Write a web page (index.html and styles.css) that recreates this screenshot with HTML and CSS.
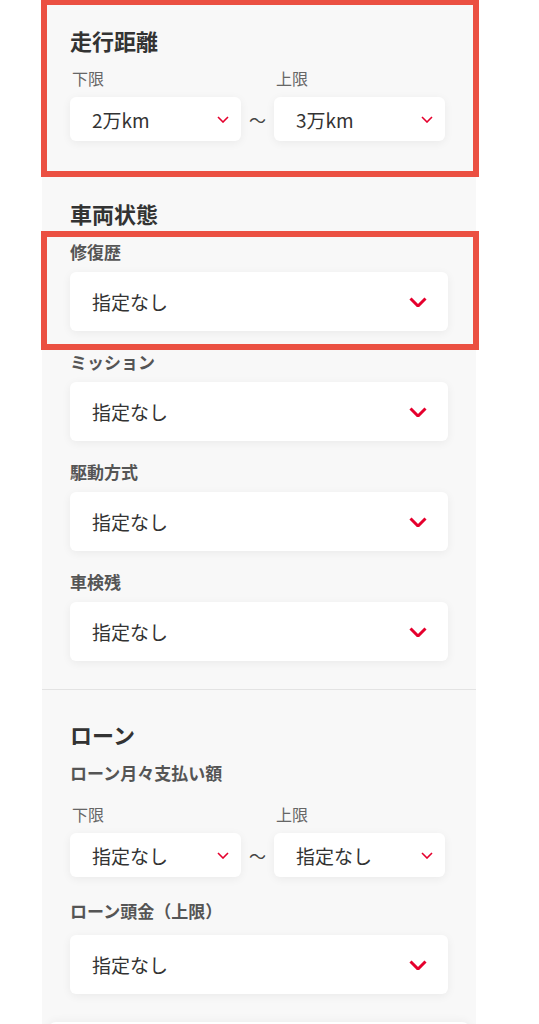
FILE: index.html
```html
<!DOCTYPE html>
<html lang="ja">
<head>
    <meta charset="UTF-8">
    <meta name="viewport" content="width=device-width, initial-scale=1.0">
    <title>絞り込み条件</title>
    <link rel="stylesheet" href="styles.css">
</head>
<body>
    <div class="panel">
        <section class="group">
            <h2 class="group-title">走行距離</h2>
            <div class="range">
                <div class="range-label">下限</div>
                <div></div>
                <div class="range-label">上限</div>
                <div class="select select-sm">
                    <span>2万km</span>
                    <svg width="12" height="7" viewBox="0 0 12 7"><path d="M1 1l5 5 5-5" fill="none" stroke="#e5002d" stroke-width="1.6"/></svg>
                </div>
                <div class="range-sep">〜</div>
                <div class="select select-sm">
                    <span>3万km</span>
                    <svg width="12" height="7" viewBox="0 0 12 7"><path d="M1 1l5 5 5-5" fill="none" stroke="#e5002d" stroke-width="1.6"/></svg>
                </div>
            </div>
        </section>

        <section class="group">
            <h2 class="group-title">車両状態</h2>
            <div class="field">
                <div class="field-label">修復歴</div>
                <div class="select">
                    <span>指定なし</span>
                    <svg width="18" height="10" viewBox="0 0 18 10"><path d="M1.5 1.5l7.5 7.5 7.5-7.5" fill="none" stroke="#e5002d" stroke-width="3"/></svg>
                </div>
            </div>
            <div class="field">
                <div class="field-label">ミッション</div>
                <div class="select">
                    <span>指定なし</span>
                    <svg width="18" height="10" viewBox="0 0 18 10"><path d="M1.5 1.5l7.5 7.5 7.5-7.5" fill="none" stroke="#e5002d" stroke-width="3"/></svg>
                </div>
            </div>
            <div class="field">
                <div class="field-label">駆動方式</div>
                <div class="select">
                    <span>指定なし</span>
                    <svg width="18" height="10" viewBox="0 0 18 10"><path d="M1.5 1.5l7.5 7.5 7.5-7.5" fill="none" stroke="#e5002d" stroke-width="3"/></svg>
                </div>
            </div>
            <div class="field">
                <div class="field-label">車検残</div>
                <div class="select">
                    <span>指定なし</span>
                    <svg width="18" height="10" viewBox="0 0 18 10"><path d="M1.5 1.5l7.5 7.5 7.5-7.5" fill="none" stroke="#e5002d" stroke-width="3"/></svg>
                </div>
            </div>
        </section>

        <section class="group group-divided">
            <h2 class="group-title">ローン</h2>
            <div class="field field-range">
                <div class="field-label">ローン月々支払い額</div>
                <div class="range">
                    <div class="range-label">下限</div>
                    <div></div>
                    <div class="range-label">上限</div>
                    <div class="select select-sm">
                        <span>指定なし</span>
                        <svg width="12" height="7" viewBox="0 0 12 7"><path d="M1 1l5 5 5-5" fill="none" stroke="#e5002d" stroke-width="1.6"/></svg>
                    </div>
                    <div class="range-sep">〜</div>
                    <div class="select select-sm">
                        <span>指定なし</span>
                        <svg width="12" height="7" viewBox="0 0 12 7"><path d="M1 1l5 5 5-5" fill="none" stroke="#e5002d" stroke-width="1.6"/></svg>
                    </div>
                </div>
            </div>
            <div class="field">
                <div class="field-label field-label-spaced">ローン頭金（上限）</div>
                <div class="select">
                    <span>指定なし</span>
                    <svg width="18" height="10" viewBox="0 0 18 10"><path d="M1.5 1.5l7.5 7.5 7.5-7.5" fill="none" stroke="#e5002d" stroke-width="3"/></svg>
                </div>
            </div>
        </section>

        <div class="panel-footer"></div>
    </div>

    <!-- 注釈の枠 -->
    <div class="mark mark-mileage"></div>
    <div class="mark mark-repair"></div>
</body>
</html>
```

FILE: styles.css
```css
body {
    margin: 0;
    background: #fff;
    font-family: "Noto Sans CJK JP", sans-serif;
    color: #333;
}

.panel {
    width: 434px;
    margin-left: 42px;
    background: #f8f8f8;
}

.group {
    padding: 30px 28px 28px;
}

.group:first-child {
    padding-top: 26px;
}

.group-divided {
    border-top: 1px solid #e3e3e3;
}

.group-title {
    margin: 0 0 13px;
    font-size: 22px;
    line-height: 28px;
    font-weight: bold;
    color: #333;
}

.field {
    margin-bottom: 19px;
}

.field:last-child {
    margin-bottom: 0;
}

.field-range {
    margin-bottom: 22px;
}

.field-range .range {
    padding-top: 10px;
}

.field-label {
    margin-bottom: 8px;
    font-size: 17px;
    line-height: 24px;
    font-weight: bold;
    color: #555;
}

.field-label-spaced {
    margin-bottom: 12px;
}

.range {
    display: grid;
    grid-template-columns: 171px 33px 171px;
    row-gap: 8px;
}

.range-label {
    padding-left: 2px;
    font-size: 16px;
    line-height: 22px;
    color: #666;
}

.range-sep {
    display: flex;
    align-items: center;
    justify-content: center;
    font-size: 17px;
    color: #444;
}

.select {
    display: flex;
    align-items: center;
    justify-content: space-between;
    height: 59px;
    padding: 0 21px 0 22px;
    background: #fff;
    border-radius: 6px;
    box-shadow: 0 2px 10px rgba(0, 0, 0, 0.06);
    font-size: 19px;
    color: #333;
}

.select-sm {
    height: 44px;
    padding-right: 12px;
}

.panel-footer {
    height: 24px;
    margin: 0 6px;
    background: #fff;
    border-radius: 8px 8px 0 0;
    box-shadow: 0 -2px 8px rgba(0, 0, 0, 0.04);
}

.mark {
    position: absolute;
    left: 41px;
    width: 426px;
    border: 6px solid #eb5042;
}

.mark-mileage {
    top: -1px;
    height: 166px;
}

.mark-repair {
    top: 231px;
    height: 107px;
}
```
